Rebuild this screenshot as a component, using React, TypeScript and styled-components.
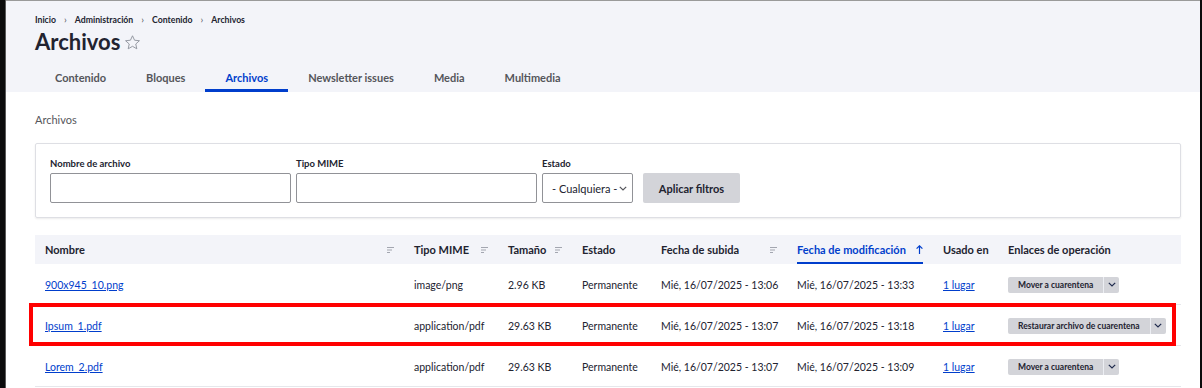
import styled, { createGlobalStyle } from "styled-components";

const GlobalStyle = createGlobalStyle`
  html, body {
    margin: 0;
    padding: 0;
    background: #0b0b0c;
  }
  body {
    font-family: Lato, "Noto Sans", sans-serif;
    color: #222330;
  }
  * {
    box-sizing: border-box;
  }
`;

const Frame = styled.div`
  margin-left: 6px;
  width: 1194px;
  min-height: 388px;
  background: #fff;
  border-top: 1px solid #9a9a9a;
  box-shadow: -1px 0 0 #5a5a5a;
`;

const PageHeader = styled.header`
  background: #f3f4f9;
  padding: 13px 19px 0 29px;
`;

const Breadcrumb = styled.nav`
  display: flex;
  align-items: center;
  gap: 8px;
  font-size: 8.7px;
  font-weight: 700;
  line-height: 12px;
  color: #222330;
`;

const Sep = styled.span`
  color: #55565b;
  font-weight: 400;
  font-size: 10px;
  line-height: 10px;
  margin-top: -2px;
`;

const TitleRow = styled.div`
  display: flex;
  align-items: center;
  gap: 4px;
  height: 30px;
  margin-top: 1px;
`;

const Title = styled.h1`
  margin: 0;
  font-size: 22px;
  font-weight: 700;
  line-height: 30px;
  color: #222330;
`;

const Tabs = styled.ul`
  display: flex;
  list-style: none;
  margin: 5px 0 0;
  padding: 0;
`;

const Tab = styled.li<{ $active?: boolean }>`
  height: 30px;
  padding: 3px 20px 0;
  display: flex;
  align-items: center;
  font-size: 11px;
  font-weight: 700;
  color: ${(p) => (p.$active ? "#003ecc" : "#55565b")};
  border-bottom: 3px solid ${(p) => (p.$active ? "#003ecc" : "transparent")};
`;

const Main = styled.main`
  padding: 20px 19px 0 29px;
`;

const SectionLabel = styled.div`
  font-size: 11px;
  line-height: 16px;
  color: #55565b;
`;

const FilterBox = styled.form`
  margin-top: 15px;
  border: 1px solid #dedfe4;
  border-radius: 2px;
  box-shadow: 0 1px 2px rgba(0, 0, 0, 0.08);
  padding: 14px;
  display: flex;
  align-items: flex-end;
  gap: 5px;
`;

const Field = styled.label<{ $width: number }>`
  display: flex;
  flex-direction: column;
  gap: 3px;
  width: ${(p) => p.$width}px;
`;

const FieldLabel = styled.span`
  font-size: 9.5px;
  font-weight: 700;
  line-height: 12px;
  color: #222330;
`;

const TextInput = styled.div`
  height: 30px;
  border: 1px solid #919297;
  border-radius: 2px;
  background: #fff;
`;

const SelectBox = styled.div`
  height: 30px;
  border: 1px solid #919297;
  border-radius: 2px;
  background: #fff;
  display: flex;
  align-items: center;
  gap: 2px;
  padding-left: 9px;
  font-size: 11px;
  color: #222330;
`;

const ApplyButton = styled.button`
  margin-left: 5px;
  height: 30px;
  width: 97px;
  border: 0;
  border-radius: 2px;
  background: #d3d4d9;
  font-family: inherit;
  font-size: 11px;
  font-weight: 700;
  color: #222330;
`;

const Table = styled.div`
  margin-top: 17px;
  display: grid;
  grid-template-columns: 369px 94px 74px 79px 136px 146px 65px 183px;
`;

const HeadCell = styled.div`
  height: 29px;
  background: #f3f4f9;
  display: flex;
  align-items: center;
  justify-content: space-between;
  padding: 0 10px;
  font-size: 11px;
  font-weight: 700;
  color: #222330;
  white-space: nowrap;
`;

const ActiveSort = styled.span`
  align-self: stretch;
  display: flex;
  align-items: center;
  gap: 10px;
  color: #003ecc;
  border-bottom: 2px solid #003ecc;
  padding-top: 2px;
`;

const Row = styled.div<{ $flagged?: boolean }>`
  grid-column: 1 / -1;
  display: grid;
  grid-template-columns: subgrid;
  height: 41px;
  border-bottom: 1px solid #e6e7eb;
  position: relative;
  ${(p) =>
    p.$flagged &&
    `
    &::after {
      content: "";
      position: absolute;
      left: -6px;
      right: 5px;
      top: -2px;
      bottom: -1px;
      border: 4px solid #ff0000;
      pointer-events: none;
    }
  `}
`;

const Cell = styled.div`
  display: flex;
  align-items: center;
  padding: 1px 10px 0;
  font-size: 10.5px;
  color: #222330;
  white-space: nowrap;
`;

const FileLink = styled.a`
  color: #003ecc;
  text-decoration: underline;
  font-size: 10.5px;
`;

const DropButton = styled.div`
  display: flex;
  height: 16px;
  border-radius: 2px;
  background: #d3d4d9;
`;

const DropMain = styled.span`
  display: flex;
  align-items: center;
  padding: 0 10px;
  font-size: 8.5px;
  font-weight: 700;
  color: #222330;
  border-right: 1px solid #eceef3;
`;

const DropToggle = styled.span`
  width: 15px;
  display: flex;
  align-items: center;
  justify-content: center;
`;

const SortIcon = () => (
  <svg width="7" height="6" viewBox="0 0 7 6">
    <rect x="0" y="0" width="7" height="1" fill="#a3a6b0" />
    <rect x="0" y="2.5" width="5" height="1" fill="#a3a6b0" />
    <rect x="0" y="5" width="3" height="1" fill="#a3a6b0" />
  </svg>
);

const Chevron = ({ color = "#222330" }: { color?: string }) => (
  <svg width="8" height="5" viewBox="0 0 8 5">
    <path d="M0.8 0.8 L4 4 L7.2 0.8" fill="none" stroke={color} strokeWidth="1.2" />
  </svg>
);

const Star = () => (
  <svg width="17" height="17" viewBox="0 0 24 24">
    <path
      d="M12 2.5l2.9 6.3 6.9.7-5.2 4.6 1.5 6.8L12 17.4l-6.1 3.5 1.5-6.8L2.2 9.5l6.9-.7z"
      fill="none"
      stroke="#8e929c"
      strokeWidth="1.3"
      strokeLinejoin="round"
    />
  </svg>
);

type FileRow = {
  name: string;
  mime: string;
  size: string;
  uploaded: string;
  modified: string;
  action: string;
  flagged?: boolean;
};

const rows: FileRow[] = [
  {
    name: "900x945_10.png",
    mime: "image/png",
    size: "2.96 KB",
    uploaded: "Mié, 16/07/2025 - 13:06",
    modified: "Mié, 16/07/2025 - 13:33",
    action: "Mover a cuarentena",
  },
  {
    name: "Ipsum_1.pdf",
    mime: "application/pdf",
    size: "29.63 KB",
    uploaded: "Mié, 16/07/2025 - 13:07",
    modified: "Mié, 16/07/2025 - 13:18",
    action: "Restaurar archivo de cuarentena",
    flagged: true,
  },
  {
    name: "Lorem_2.pdf",
    mime: "application/pdf",
    size: "29.63 KB",
    uploaded: "Mié, 16/07/2025 - 13:07",
    modified: "Mié, 16/07/2025 - 13:09",
    action: "Mover a cuarentena",
  },
];

const tabs = ["Contenido", "Bloques", "Archivos", "Newsletter issues", "Media", "Multimedia"];

function App() {
  return (
    <>
      <GlobalStyle />
      <Frame>
        <PageHeader>
          <Breadcrumb>
            <span>Inicio</span>
            <Sep>›</Sep>
            <span>Administración</span>
            <Sep>›</Sep>
            <span>Contenido</span>
            <Sep>›</Sep>
            <span>Archivos</span>
          </Breadcrumb>
          <TitleRow>
            <Title>Archivos</Title>
            <Star />
          </TitleRow>
          <Tabs>
            {tabs.map((t) => (
              <Tab key={t} $active={t === "Archivos"}>
                {t}
              </Tab>
            ))}
          </Tabs>
        </PageHeader>

        <Main>
          <SectionLabel>Archivos</SectionLabel>
          <FilterBox>
            <Field $width={241}>
              <FieldLabel>Nombre de archivo</FieldLabel>
              <TextInput />
            </Field>
            <Field $width={241}>
              <FieldLabel>Tipo MIME</FieldLabel>
              <TextInput />
            </Field>
            <Field $width={91}>
              <FieldLabel>Estado</FieldLabel>
              <SelectBox>
                - Cualquiera - <Chevron color="#55565b" />
              </SelectBox>
            </Field>
            <ApplyButton type="button">Aplicar filtros</ApplyButton>
          </FilterBox>

          <Table>
            <HeadCell>
              Nombre <SortIcon />
            </HeadCell>
            <HeadCell>
              Tipo MIME <SortIcon />
            </HeadCell>
            <HeadCell>
              Tamaño <SortIcon />
            </HeadCell>
            <HeadCell>Estado</HeadCell>
            <HeadCell>
              Fecha de subida <SortIcon />
            </HeadCell>
            <HeadCell>
              <ActiveSort>
                Fecha de modificación
                <svg width="7" height="9" viewBox="0 0 7 9">
                  <path d="M3.5 9V1 M0.6 3.6L3.5 0.8 6.4 3.6" fill="none" stroke="#003ecc" strokeWidth="1.2" />
                </svg>
              </ActiveSort>
            </HeadCell>
            <HeadCell>Usado en</HeadCell>
            <HeadCell>Enlaces de operación</HeadCell>

            {rows.map((r) => (
              <Row key={r.name} $flagged={r.flagged}>
                <Cell>
                  <FileLink href="#">{r.name}</FileLink>
                </Cell>
                <Cell>{r.mime}</Cell>
                <Cell>{r.size}</Cell>
                <Cell>Permanente</Cell>
                <Cell>{r.uploaded}</Cell>
                <Cell>{r.modified}</Cell>
                <Cell>
                  <FileLink href="#">1 lugar</FileLink>
                </Cell>
                <Cell>
                  <DropButton>
                    <DropMain>{r.action}</DropMain>
                    <DropToggle>
                      <Chevron color="#1f2a4d" />
                    </DropToggle>
                  </DropButton>
                </Cell>
              </Row>
            ))}
          </Table>
        </Main>
      </Frame>
    </>
  );
}

export default App;
